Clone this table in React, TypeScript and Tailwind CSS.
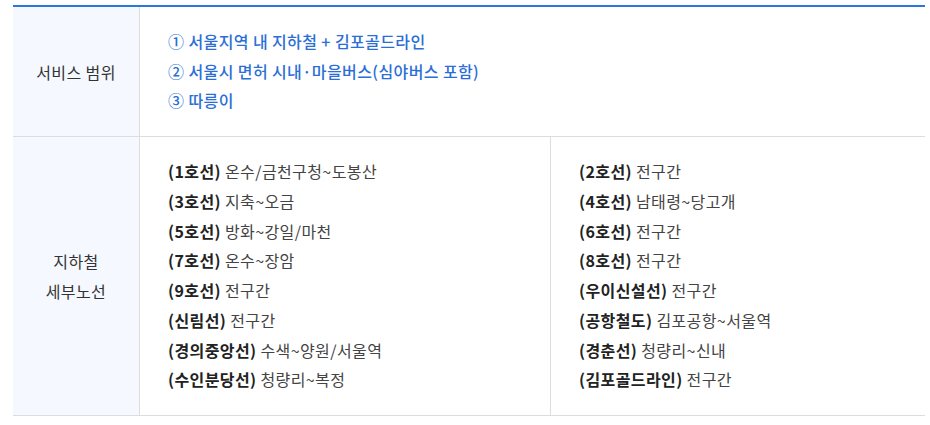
const serviceScope = [
  "① 서울지역 내 지하철 + 김포골드라인",
  "② 서울시 면허 시내·마을버스(심야버스 포함)",
  "③ 따릉이",
];

const leftLines: [string, string][] = [
  ["(1호선)", "온수/금천구청~도봉산"],
  ["(3호선)", "지축~오금"],
  ["(5호선)", "방화~강일/마천"],
  ["(7호선)", "온수~장암"],
  ["(9호선)", "전구간"],
  ["(신림선)", "전구간"],
  ["(경의중앙선)", "수색~양원/서울역"],
  ["(수인분당선)", "청량리~복정"],
];

const rightLines: [string, string][] = [
  ["(2호선)", "전구간"],
  ["(4호선)", "남태령~당고개"],
  ["(6호선)", "전구간"],
  ["(8호선)", "전구간"],
  ["(우이신설선)", "전구간"],
  ["(공항철도)", "김포공항~서울역"],
  ["(경춘선)", "청량리~신내"],
  ["(김포골드라인)", "전구간"],
];

function LineList({ items }: { items: [string, string][] }) {
  return (
    <ul className="py-[20px] pl-[28px]">
      {items.map(([name, range]) => (
        <li key={name} className="leading-[29.75px] whitespace-nowrap">
          <span className="font-semibold text-[#222]">{name}</span>{" "}
          <span className="text-[#444]">{range}</span>
        </li>
      ))}
    </ul>
  );
}

export default function App() {
  return (
    <div
      className="w-[930px] h-[425px] bg-white pt-[5px] pl-[13px] text-[16px] tracking-[0.4px]"
      style={{ fontFamily: '"Noto Sans CJK KR", "Noto Sans", sans-serif' }}
    >
      <div className="w-[912px] border-t-2 border-[#2a78dc]">
        <div className="flex border-b border-[#ddd]">
          <div className="w-[127px] shrink-0 bg-[#f5f8ff] border-r border-[#ddd] flex items-center justify-center text-[#333]">
            서비스 범위
          </div>
          <ul className="flex-1 py-[20px] pl-[28px] text-[#2b6fd6] font-medium">
            {serviceScope.map((s) => (
              <li key={s} className="leading-[29.67px]">
                {s}
              </li>
            ))}
          </ul>
        </div>
        <div className="flex border-b border-[#ddd]">
          <div className="w-[127px] shrink-0 bg-[#f5f8ff] border-r border-[#ddd] flex items-center justify-center text-center text-[#333] leading-[30px]">
            지하철
            <br />
            세부노선
          </div>
          <div className="flex-1 flex">
            <div className="w-[411px] shrink-0 border-r border-[#ddd]">
              <LineList items={leftLines} />
            </div>
            <div className="flex-1">
              <LineList items={rightLines} />
            </div>
          </div>
        </div>
      </div>
    </div>
  );
}
